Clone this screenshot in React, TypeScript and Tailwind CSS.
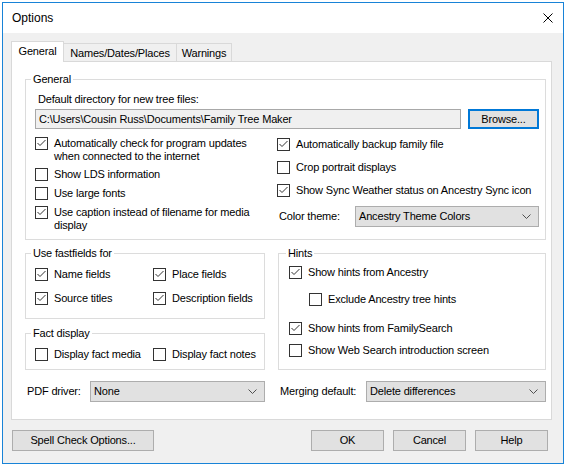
import React from "react";

function Box({ checked }: { checked?: boolean }) {
  return (
    <span className="w-[13px] h-[13px] shrink-0 border border-[#333333] bg-white flex items-center justify-center">
      {checked && (
        <svg width="11" height="11" viewBox="0 0 11 11">
          <polyline points="1.5,5 4,7.5 9.5,2" fill="none" stroke="#333333" strokeWidth="1" />
        </svg>
      )}
    </span>
  );
}

function Check({
  checked,
  children,
  className = "",
}: {
  checked?: boolean;
  children: React.ReactNode;
  className?: string;
}) {
  return (
    <div className={"flex items-start gap-[6px] " + className}>
      <Box checked={checked} />
      <span className="leading-[13px] whitespace-nowrap">{children}</span>
    </div>
  );
}

function Chevron() {
  return (
    <svg width="9" height="5" viewBox="0 0 9 5">
      <polyline points="0.5,0.5 4.5,4.5 8.5,0.5" fill="none" stroke="#505050" strokeWidth="1" />
    </svg>
  );
}

function Select({ value, className = "" }: { value: string; className?: string }) {
  return (
    <div
      className={
        "h-[21px] border border-[#adadad] bg-[#e1e1e1] flex items-center justify-between pl-[3px] pr-[7px] " +
        className
      }
    >
      <span className="whitespace-nowrap">{value}</span>
      <Chevron />
    </div>
  );
}

function Button({ label, className = "" }: { label: string; className?: string }) {
  return (
    <div
      className={
        "h-[21px] border border-[#adadad] bg-[#e1e1e1] flex items-center justify-center " + className
      }
    >
      {label}
    </div>
  );
}

export default function App() {
  return (
    <div className="w-[566px] h-[467px] bg-white pt-[2px] pl-[2px] font-['Liberation_Sans',Arial,sans-serif] text-[11px] tracking-[-0.17px] text-black">
      <div className="w-[562px] h-[462px] border border-[#1883d7] bg-[#f0f0f0] flex flex-col">
        {/* Title bar */}
        <div className="h-[30px] bg-white flex items-center justify-between pl-[9px] pr-[10px]">
          <span className="text-[12px] tracking-normal">Options</span>
          <svg width="10" height="10" viewBox="0 0 10 10">
            <line x1="0.5" y1="0.5" x2="9.5" y2="9.5" stroke="#000" strokeWidth="1" />
            <line x1="9.5" y1="0.5" x2="0.5" y2="9.5" stroke="#000" strokeWidth="1" />
          </svg>
        </div>

        {/* Body */}
        <div className="flex-1 pl-[8px] pt-[8px]">
          {/* Tabs */}
          <div className="flex items-end">
            <div className="relative z-10 w-[53px] h-[21px] -mb-px border border-b-0 border-[#d9d9d9] bg-white flex items-center justify-center pb-[1px]">
              General
            </div>
            <div className="w-[113px] h-[18px] border border-l-0 border-b-0 border-[#d9d9d9] bg-[#f0f0f0] flex items-center justify-center pt-[1px]">
              Names/Dates/Places
            </div>
            <div className="w-[55px] h-[18px] border border-l-0 border-b-0 border-[#d9d9d9] bg-[#f0f0f0] flex items-center justify-center pt-[1px]">
              Warnings
            </div>
          </div>

          {/* Panel */}
          <div className="w-[541px] border border-[#d9d9d9] bg-white pl-[13px] pr-[5px] pt-[10px] pb-[17px]">
            {/* General group */}
            <fieldset className="border border-[#dcdcdc]">
              <legend className="ml-[5px] px-[2px] leading-[15px]">General</legend>
              <div className="pl-[9px] pr-[6px] pt-[5px] pb-[7px]">
                <div className="pl-[3px] leading-[14px]">Default directory for new tree files:</div>
                <div className="mt-[3px] flex gap-[7px]">
                  <div className="w-[426px] h-[20px] border border-[#a8a8a8] bg-[#f0f0f0] flex items-center pl-[3px] whitespace-nowrap">
                    C:\Users\Cousin Russ\Documents\Family Tree Maker
                  </div>
                  <div className="w-[71px] h-[20px] border-2 border-[#0078d7] bg-[#e1e1e1] flex items-center justify-center">
                    Browse...
                  </div>
                </div>
                <div className="mt-[8px] grid grid-cols-[242px_262px]">
                  <div className="flex flex-col">
                    <div className="flex items-start gap-[6px]">
                      <Box checked />
                      <span className="leading-[13px]">
                        Automatically check for program updates
                        <br />
                        when connected to the internet
                      </span>
                    </div>
                    <Check className="mt-[5px]">Show LDS information</Check>
                    <Check className="mt-[6px]">Use large fonts</Check>
                    <div className="mt-[6px] flex items-start gap-[6px]">
                      <Box checked />
                      <span className="leading-[13px]">
                        Use caption instead of filename for media
                        <br />
                        display
                      </span>
                    </div>
                  </div>
                  <div className="flex flex-col">
                    <Check checked className="mt-[1px]">Automatically backup family file</Check>
                    <Check className="mt-[10px]">Crop portrait displays</Check>
                    <Check checked className="mt-[10px]">Show Sync Weather status on Ancestry Sync icon</Check>
                    <div className="mt-[9px] flex items-center">
                      <span className="pl-[2px]">Color theme:</span>
                      <Select value="Ancestry Theme Colors" className="ml-auto w-[184px]" />
                    </div>
                  </div>
                </div>
              </div>
            </fieldset>

            {/* Lower groups */}
            <div className="mt-[6px] grid grid-cols-[240px_268px] gap-x-[13px]">
              <div className="flex flex-col">
                <fieldset className="border border-[#dcdcdc]">
                  <legend className="ml-[5px] px-[2px] leading-[15px]">Use fastfields for</legend>
                  <div className="pl-[9px] pt-[7px] pb-[13px] grid grid-cols-[118px_1fr] gap-y-[11px]">
                    <Check checked>Name fields</Check>
                    <Check checked>Place fields</Check>
                    <Check checked>Source titles</Check>
                    <Check checked>Description fields</Check>
                  </div>
                </fieldset>
                <fieldset className="mt-[7px] border border-[#dcdcdc]">
                  <legend className="ml-[5px] px-[2px] leading-[15px]">Fact display</legend>
                  <div className="pl-[9px] pt-[7px] pb-[8px] grid grid-cols-[118px_1fr]">
                    <Check>Display fact media</Check>
                    <Check>Display fact notes</Check>
                  </div>
                </fieldset>
              </div>
              <fieldset className="border border-[#dcdcdc]">
                <legend className="ml-[7px] px-[2px] leading-[15px]">Hints</legend>
                <div className="pl-[10px] pt-[5px] flex flex-col">
                  <Check checked>Show hints from Ancestry</Check>
                  <Check className="mt-[14px] ml-[20px]">Exclude Ancestry tree hints</Check>
                  <Check checked className="mt-[16px]">Show hints from FamilySearch</Check>
                  <Check className="mt-[9px]">Show Web Search introduction screen</Check>
                </div>
              </fieldset>
            </div>

            {/* Driver / merging row */}
            <div className="mt-[11px] grid grid-cols-[240px_268px] gap-x-[13px]">
              <div className="flex items-center">
                <span className="pl-[2px]">PDF driver:</span>
                <Select value="None" className="ml-auto w-[175px]" />
              </div>
              <div className="flex items-center">
                <span className="pl-[2px]">Merging default:</span>
                <Select value="Delete differences" className="ml-auto w-[180px]" />
              </div>
            </div>
          </div>

          {/* Bottom buttons */}
          <div className="mt-[10px] w-[537px] flex items-center">
            <Button label="Spell Check Options..." className="ml-[1px] w-[142px]" />
            <Button label="OK" className="ml-auto w-[73px]" />
            <Button label="Cancel" className="ml-[9px] w-[73px]" />
            <Button label="Help" className="ml-[9px] w-[73px]" />
          </div>
        </div>
      </div>
    </div>
  );
}
